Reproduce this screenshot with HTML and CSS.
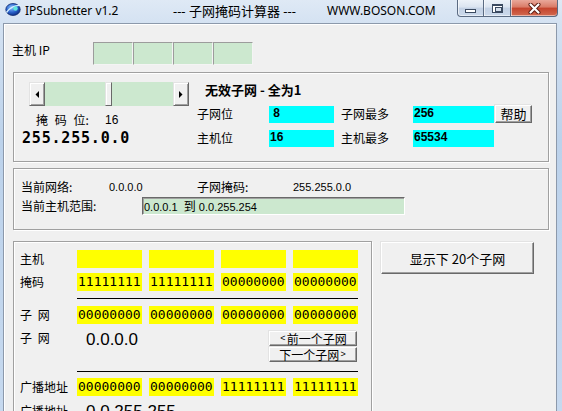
FILE: index.html
```html
<!DOCTYPE html>
<html lang="zh-CN">
<head>
<meta charset="utf-8">
<title>IPSubnetter v1.2</title>
<link rel="stylesheet" href="styles.css">
</head>
<body>
<div class="window">
  <div class="titlebar">
    <span class="appicon">
      <svg width="17" height="14" viewBox="0 0 17 14">
        <defs>
          <radialGradient id="globe" cx="40%" cy="35%" r="70%">
            <stop offset="0" stop-color="#8cc4ff"/>
            <stop offset="0.55" stop-color="#2a62cc"/>
            <stop offset="1" stop-color="#0a2a7e"/>
          </radialGradient>
        </defs>
        <ellipse cx="8" cy="7.5" rx="7.2" ry="6" fill="url(#globe)" stroke="#0f2a70" stroke-width="0.8"/>
        <path d="M1.5 10.5 Q7 3 15.5 3.5" stroke="#d7f0ff" stroke-width="1.3" fill="none"/>
        <circle cx="10.5" cy="6.5" r="2.2" fill="#5fe6dc"/>
      </svg>
    </span>
    <span class="ttl t1">IPSubnetter v1.2</span>
    <span class="ttl t2">--- 子网掩码计算器 ---</span>
    <span class="ttl t3">WWW.BOSON.COM</span>
    <div class="caps">
      <span class="cap cap-min"><span class="glyph-min"></span></span>
      <span class="cap cap-max"><span class="glyph-max"></span></span>
      <span class="cap cap-close">
        <svg width="13" height="11" viewBox="0 0 13 11">
          <path d="M2.5 1.5 L10.5 9.5 M10.5 1.5 L2.5 9.5" stroke="#5a1a10" stroke-width="4" stroke-linecap="round"/>
          <path d="M2.5 1.5 L10.5 9.5 M10.5 1.5 L2.5 9.5" stroke="#ffffff" stroke-width="2.2" stroke-linecap="round"/>
        </svg>
      </span>
    </div>
  </div>

  <div class="frame">
    <div class="client">
      <div class="ip-row">
        <span class="ip-label">主机 IP</span>
        <div class="ip-boxes">
          <span class="ip-box"></span><span class="ip-box"></span><span class="ip-box"></span><span class="ip-box"></span>
        </div>
      </div>

      <div class="group g1">
        <div class="g1-left">
          <div class="scrollbar">
            <span class="sb-btn">
              <svg width="4" height="7" viewBox="0 0 4 7"><path d="M4 0 L0.5 3.5 L4 7 Z" fill="#000"/></svg>
            </span>
            <span class="sb-track sb-track1"></span>
            <span class="sb-thumb"></span>
            <span class="sb-track sb-track2"></span>
            <span class="sb-btn">
              <svg width="4" height="7" viewBox="0 0 4 7"><path d="M0 0 L3.5 3.5 L0 7 Z" fill="#000"/></svg>
            </span>
          </div>
          <div class="mask-row">
            <span class="mask-label">掩 码 位:</span>
            <span class="num">16</span>
          </div>
          <div class="mask-ip">255.255.0.0</div>
        </div>
        <div class="g1-right">
          <div class="g1-title">无效子网 - 全为1</div>
          <div class="stat-row">
            <span class="stat-label">子网位</span>
            <span class="cyan w65">&nbsp;8</span>
            <span class="stat-label">子网最多</span>
            <span class="cyan w81">256</span>
            <button class="btn help">帮助</button>
          </div>
          <div class="stat-row second">
            <span class="stat-label">主机位</span>
            <span class="cyan w65">16</span>
            <span class="stat-label">主机最多</span>
            <span class="cyan w81">65534</span>
          </div>
        </div>
      </div>

      <div class="group g2">
        <div class="g2-row1">
          <span class="c1">当前网络:</span>
          <span class="c2 num">0.0.0.0</span>
          <span class="c3">子网掩码:</span>
          <span class="num">255.255.0.0</span>
        </div>
        <div class="g2-row2">
          <span class="range-label">当前主机范围:</span>
          <span class="range-field">0.0.0.1&nbsp; <span class="cjk">到</span> 0.0.255.254</span>
        </div>
      </div>

      <div class="bottom">
        <div class="group g3">
          <div class="brow">
            <span class="rl">主机</span>
            <span class="yb"></span><span class="yb"></span><span class="yb"></span><span class="yb"></span>
          </div>
          <div class="brow gap5">
            <span class="rl">掩码</span>
            <span class="yb">11111111</span><span class="yb">11111111</span><span class="yb">00000000</span><span class="yb">00000000</span>
          </div>
          <div class="bline bline1"></div>
          <div class="brow">
            <span class="rl sp">子 网</span>
            <span class="yb">00000000</span><span class="yb">00000000</span><span class="yb">00000000</span><span class="yb">00000000</span>
          </div>
          <div class="brow vrow">
            <span class="rl sp vlabel">子 网</span>
            <span class="bigval">0.0.0.0</span>
            <div class="navs">
              <button class="btn navbtn"><span class="arrow">&lt;</span> 前一个子网</button>
              <button class="btn navbtn">下一个子网 <span class="arrow">&gt;</span></button>
            </div>
          </div>
          <div class="bline bline2"></div>
          <div class="brow">
            <span class="rl">广播地址</span>
            <span class="yb">00000000</span><span class="yb">00000000</span><span class="yb">11111111</span><span class="yb">11111111</span>
          </div>
          <div class="brow gap5 lastrow">
            <span class="rl">广播地址</span>
            <span class="bigval">0.0.255.255</span>
          </div>
        </div>
        <button class="btn show20">显示下 20个子网</button>
      </div>
    </div>
  </div>
</div>
</body>
</html>
```

FILE: styles.css
```css
* { box-sizing: border-box; }

html, body {
  margin: 0;
  padding: 0;
}

body {
  width: 562px;
  height: 411px;
  overflow: hidden;
  background: #c9dbef;
  font-family: "Liberation Sans", "Noto Sans CJK SC", sans-serif;
  font-size: 12px;
  color: #000;
}

.window {
  width: 562px;
  height: 411px;
  display: flex;
  flex-direction: column;
  overflow: hidden;
  background: linear-gradient(180deg, #dfe9f5 0px, #d4e2f2 23px, #bcd2eb 140px, #c6d9ef 411px);
}

/* ---------- title bar ---------- */
.titlebar {
  height: 23px;
  flex: none;
  display: flex;
  align-items: flex-start;
  padding-left: 5px;
}

.appicon {
  display: block;
  width: 17px;
  height: 14px;
  margin-top: 2px;
}

.appicon svg { display: block; }

.ttl {
  font-family: "Noto Sans", "Noto Sans CJK SC", sans-serif;
  font-size: 12px;
  line-height: 16px;
  margin-top: 3px;
  white-space: nowrap;
  color: #000;
}

.t1 { width: 148px; margin-left: 3px; }
.t2 { width: 154px; font-size: 13px; }
.t3 { width: 120px; }

.caps {
  margin-left: auto;
  margin-right: 4px;
  display: flex;
  height: 17px;
}

.cap {
  height: 17px;
  display: flex;
  align-items: center;
  justify-content: center;
  border: 1px solid #5b6b82;
  border-top: none;
  border-left: none;
  box-shadow: inset 1px 0 0 rgba(255,255,255,0.6), inset 0 -1px 0 rgba(255,255,255,0.5);
}

.cap-min, .cap-max {
  width: 27px;
  background: linear-gradient(180deg, #edf2f8 0%, #dbe4f0 45%, #c3d1e4 50%, #cbd9eb 100%);
}

.cap-min {
  border-left: 1px solid #5b6b82;
  border-bottom-left-radius: 4px;
}

.cap-close {
  width: 47px;
  border-bottom-right-radius: 4px;
  background: linear-gradient(180deg, #e9a89a 0%, #d97a66 45%, #c4432c 50%, #d26a50 100%);
}

.cap-close svg { display: block; }

.glyph-min {
  display: block;
  width: 11px;
  height: 4px;
  margin-top: 6px;
  background: #fff;
  border: 1px solid #3b4a60;
}

.glyph-max {
  display: block;
  width: 11px;
  height: 9px;
  background: #fff;
  border: 1px solid #3b4a60;
  border-top-width: 2px;
  padding: 1px 2px 1px 2px;
}

.glyph-max::after {
  content: "";
  display: block;
  width: 5px;
  height: 3px;
  border: 1px solid #3b4a60;
  background: #d5dfec;
}

/* ---------- frame / client ---------- */
.frame {
  flex: 1;
  min-height: 0;
  display: flex;
  padding: 0 5px 0 3px;
}

.client {
  flex: 1;
  background: #f0f0f0;
  border: 1px solid #8c99ab;
  border-bottom: none;
  box-shadow: inset 1px 1px 0 #ffffff;
  padding-left: 9px;
  display: flex;
  flex-direction: column;
  overflow: hidden;
}

.cjk, .ip-label, .mask-label, .stat-label, .g1-title, .c1, .c3, .range-label, .rl, .btn {
  font-family: "Noto Sans CJK SC", "Liberation Sans", sans-serif;
}

.num {
  font-family: "Liberation Sans", sans-serif;
  font-size: 11px;
}

/* ---------- host ip row ---------- */
.ip-row {
  display: flex;
  margin-top: 18px;
  margin-left: -1px;
  height: 23px;
}

.ip-label {
  width: 81px;
  line-height: 14px;
  padding-top: 1px;
}

.ip-boxes { display: flex; }

.ip-box {
  width: 40px;
  height: 23px;
  background: #cce8cf;
  border: 1px solid;
  border-color: #9c9c9c #f4f4f4 #f4f4f4 #9c9c9c;
}

/* ---------- group boxes ---------- */
.group {
  border: 1px solid #a0a0a0;
  box-shadow: inset 1px 1px 0 #ffffff, 1px 1px 0 #ffffff;
  flex: none;
}

.g1 {
  width: 536px;
  height: 90px;
  margin-top: 7px;
  padding: 9px 0 0 8px;
  display: flex;
}

.g1-left { width: 175px; flex: none; }

.scrollbar {
  margin-left: 7px;
  width: 160px;
  height: 24px;
  display: flex;
}

.sb-btn {
  width: 16px;
  height: 24px;
  flex: none;
  display: flex;
  align-items: center;
  justify-content: center;
  background: #f0f0f0;
  border: 1px solid;
  border-color: #e3e3e3 #696969 #696969 #e3e3e3;
  box-shadow: inset 1px 1px 0 #ffffff, inset -1px -1px 0 #a0a0a0;
}

.sb-btn svg { display: block; }

.sb-track { background: #cce8cf; height: 24px; }
.sb-track1 { width: 60px; }
.sb-track2 { flex: 1; }

.sb-thumb {
  width: 7px;
  height: 24px;
  flex: none;
  background: #f0f0f0;
  border: 1px solid;
  border-color: #e3e3e3 #696969 #696969 #e3e3e3;
  box-shadow: inset 1px 1px 0 #ffffff;
}

.mask-row {
  display: flex;
  margin-top: 7px;
  padding-left: 14px;
  line-height: 14px;
  height: 14px;
}

.mask-label {
  width: 69px;
  word-spacing: 4px;
}

.mask-row .num { font-size: 12px; }

.mask-ip {
  margin-top: 2px;
  font-family: "DejaVu Sans Mono", "Liberation Mono", monospace;
  font-weight: bold;
  font-size: 15px;
  letter-spacing: 0.8px;
  line-height: 18px;
}

.g1-right { flex: 1; }

.g1-title {
  height: 24px;
  padding-left: 8px;
  font-weight: bold;
  font-size: 13px;
  line-height: 15px;
}

.stat-row {
  display: flex;
  align-items: flex-start;
  height: 17px;
}

.stat-row.second { margin-top: 7px; }

.stat-label {
  width: 72px;
  flex: none;
  line-height: 15px;
}

.cyan {
  height: 17px;
  flex: none;
  background: #00ffff;
  font-family: "Liberation Sans", sans-serif;
  font-weight: bold;
  font-size: 12px;
  line-height: 15px;
  padding-left: 1px;
}

.w65 { width: 65px; margin-right: 7px; }
.w81 { width: 81px; }

/* ---------- buttons ---------- */
.btn {
  margin: 0;
  padding: 0;
  background: #f0f0f0;
  color: #000;
  font-size: 12px;
  border: 1px solid;
  border-color: #ffffff #696969 #696969 #ffffff;
  box-shadow: inset -1px -1px 0 #a0a0a0, -1px -1px 0 #e3e3e3;
  display: flex;
  align-items: center;
  justify-content: center;
  white-space: nowrap;
}

.help {
  width: 37px;
  height: 18px;
  margin-left: 1px;
  margin-top: -1px;
  line-height: 14px;
  font-size: 13px;
}

/* ---------- group 2 ---------- */
.g2 {
  width: 536px;
  height: 62px;
  margin-top: 6px;
  padding: 11px 0 0 7px;
}

.g2-row1 {
  display: flex;
  height: 14px;
  line-height: 14px;
}

.c1, .c2 { width: 88px; }
.c3 { width: 96px; }

.g2-row2 {
  display: flex;
  align-items: center;
  margin-top: 3px;
  height: 18px;
}

.range-label { width: 121px; line-height: 14px; }

.range-field {
  width: 263px;
  height: 18px;
  background: #cce8cf;
  border: 1px solid;
  border-color: #696969 #ffffff #ffffff #696969;
  box-shadow: inset 1px 1px 0 #a0a0a0;
  font-size: 11px;
  line-height: 16px;
  padding-left: 1px;
  white-space: nowrap;
}

.range-field .cjk { font-size: 12px; }

/* ---------- bottom ---------- */
.bottom {
  display: flex;
  align-items: flex-start;
  margin-top: 11px;
}

.g3 {
  width: 359px;
  height: 200px;
  padding: 8px 0 0 6px;
}

.show20 {
  width: 153px;
  height: 32px;
  margin-left: 9px;
  margin-top: 1px;
  flex: none;
  font-size: 13px;
}

.brow {
  display: grid;
  grid-template-columns: 50px repeat(4, 65px);
  column-gap: 7px;
  align-items: center;
  height: 18px;
}

.brow.gap5 { margin-top: 5px; }

.rl {
  line-height: 14px;
  white-space: nowrap;
}

.rl.sp { word-spacing: 3px; }

.yb {
  height: 18px;
  background: #ffff00;
  font-family: "DejaVu Sans Mono", "Liberation Mono", monospace;
  font-size: 13px;
  line-height: 18px;
  padding-left: 1px;
  overflow: hidden;
}

.bline {
  height: 1px;
  width: 281px;
  margin-left: 57px;
  background: #000;
}

.bline1 { margin-top: 7px; margin-bottom: 7px; }
.bline2 { margin-top: 9px; margin-bottom: 6px; }

.vrow {
  height: 38px;
  align-items: start;
}

.vlabel { padding-top: 7px; }

.bigval {
  grid-column: 2 / span 2;
  padding-left: 9px;
  margin-top: 6px;
  font-family: "Liberation Sans", sans-serif;
  font-size: 17px;
  line-height: 20px;
}

.lastrow { align-items: start; }
.lastrow .rl { padding-top: 3px; }
.lastrow .bigval { margin-top: 1px; }

.navs {
  grid-column: 4 / span 2;
  justify-self: end;
  margin-right: 1px;
  margin-top: 7px;
  display: flex;
  flex-direction: column;
  gap: 1px;
}

.navbtn {
  width: 88px;
  height: 15px;
  line-height: 13px;
  font-size: 12px;
}

.navbtn .arrow {
  font-family: "Liberation Sans", sans-serif;
  font-size: 9px;
  margin: 0 1px;
}
```
